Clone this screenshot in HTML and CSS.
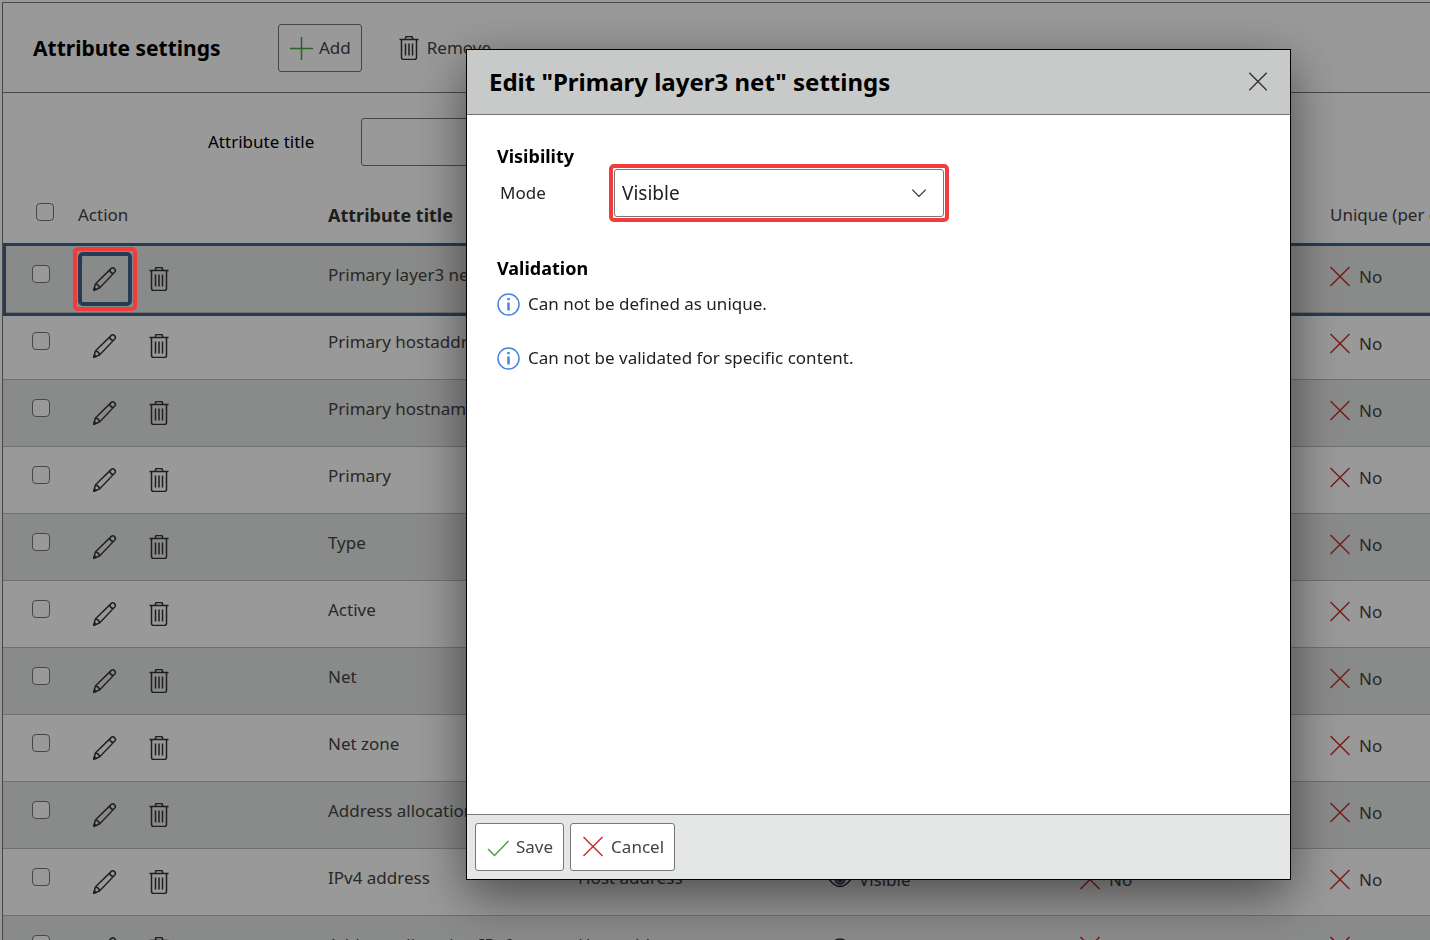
FILE: index.html
```html
<!DOCTYPE html>
<html lang="en">
<head>
    <meta charset="UTF-8">
    <meta name="viewport" content="width=device-width, initial-scale=1.0">
    <title>Attribute settings</title>
    <link rel="stylesheet" href="styles.css">
</head>
<body>

    <svg class="sprite" aria-hidden="true">
        <symbol id="i-plus" viewBox="0 0 24 24"><path d="M12.500 1v23M1 12.500h23"/></symbol>
        <symbol id="i-trash" viewBox="0 0 24 24"><path d="M2.500 3.500h19M8.500 3.500v-1.500q0-1.500 1.500-1.500h4q1.500 0 1.500 1.500v1.500M4.500 3.500v18q0 2 2 2h11q2 0 2-2v-18M8.500 7.500v12M12 7.500v12M15.500 7.500v12"/></symbol>
        <symbol id="i-pencil" viewBox="0 0 24 24"><path d="M.5 23.500L2.500 16.800 18.300 1.400q1.600-1.300 3.200.2t.4 3.300L6.600 20.900zM2.500 16.800q3.300.8 4.100 4.100M16.800 2.900q.4 3.300 3.600 3.700M.5 23.500l2.800-1-1.900-1.900z"/></symbol>
        <symbol id="i-cross" viewBox="0 0 24 24"><path d="M2.500 2l19 19M21.500 2l-19 19"/></symbol>
        <symbol id="i-check" viewBox="0 0 24 24"><path d="M2 14l6.500 6.500L22.500 6"/></symbol>
        <symbol id="i-info" viewBox="0 0 24 24"><circle cx="11.500" cy="12.500" r="10.500"/><path d="M11.500 10.500v8M11.500 6v2.300" stroke-width="2.500"/></symbol>
        <symbol id="i-eye" viewBox="0 0 24 24"><path d="M1 11q11-14 22 0-11 15-22 0z"/><circle cx="12" cy="11" r="5" fill="#6f9fe0"/><circle cx="12" cy="11" r="2" fill="#333"/></symbol>
        <symbol id="i-down" viewBox="0 0 24 24"><path d="M4 8l8 8 8-8"/></symbol>
    </svg>

    <main class="panel">
        <div class="toolbar">
            <h1>Attribute settings</h1>
            <button class="btn" type="button"><svg class="icon green"><use href="#i-plus"/></svg>Add</button>
            <button class="btn btn-plain" type="button"><svg class="icon"><use href="#i-trash"/></svg>Remove</button>
        </div>

        <div class="filter">
            <label for="filterTitle">Attribute title</label>
            <input type="text" id="filterTitle">
        </div>

        <table class="attributes">
            <colgroup>
                <col class="col-check">
                <col class="col-data">
                <col class="col-data">
                <col class="col-data">
                <col class="col-data">
                <col class="col-data">
                <col>
            </colgroup>
            <thead>
                <tr>
                    <th><input type="checkbox" aria-label="Select all"></th>
                    <th>Action</th>
                    <th class="sorted">Attribute title</th>
                    <th></th>
                    <th></th>
                    <th></th>
                    <th>Unique (per object)</th>
                </tr>
            </thead>
            <tbody id="rows"></tbody>
        </table>
    </main>

    <div class="backdrop">
        <div class="dialog" role="dialog" aria-labelledby="dialogTitle">
            <div class="dialog-header">
                <h2 id="dialogTitle">Edit "Primary layer3 net" settings</h2>
                <button class="close" type="button" aria-label="Close"><svg class="icon"><use href="#i-cross"/></svg></button>
            </div>
            <div class="dialog-body">
                <h3>Visibility</h3>
                <div class="field">
                    <label for="mode">Mode</label>
                    <div class="select marked">
                        <select id="mode">
                            <option>Visible</option>
                        </select>
                        <svg class="icon"><use href="#i-down"/></svg>
                    </div>
                </div>
                <h3>Validation</h3>
                <p class="info"><svg class="icon"><use href="#i-info"/></svg>Can not be defined as unique.</p>
                <p class="info"><svg class="icon"><use href="#i-info"/></svg>Can not be validated for specific content.</p>
            </div>
            <div class="dialog-footer">
                <button class="btn" type="button"><svg class="icon green"><use href="#i-check"/></svg>Save</button>
                <button class="btn" type="button"><svg class="icon red"><use href="#i-cross"/></svg>Cancel</button>
            </div>
        </div>
    </div>

    <script>
        const attributes = [
            { title: "Primary layer3 net", active: true },
            { title: "Primary hostaddress" },
            { title: "Primary hostname" },
            { title: "Primary" },
            { title: "Type" },
            { title: "Active" },
            { title: "Net" },
            { title: "Net zone" },
            { title: "Address allocation" },
            { title: "IPv4 address", type: "Host address" },
            { title: "Address allocation IPv6", type: "Host address" }
        ];

        function icon(name, cls) {
            return `<svg class="icon ${cls || ""}"><use href="#i-${name}"/></svg>`;
        }

        document.getElementById("rows").innerHTML = attributes.map(a => `
            <tr class="${a.active ? "active" : ""}">
                <td><input type="checkbox" aria-label="Select ${a.title}"></td>
                <td class="actions">
                    <button type="button" class="${a.active ? "focused marked" : ""}" aria-label="Edit">${icon("pencil")}</button>
                    <button type="button" aria-label="Delete">${icon("trash")}</button>
                </td>
                <td>${a.title}</td>
                <td>${a.type || ""}</td>
                <td>${a.type ? `<span class="state">${icon("eye")}Visible</span>` : ""}</td>
                <td>${a.type ? `<span class="state">${icon("cross", "red")}No</span>` : ""}</td>
                <td><span class="state">${icon("cross", "red")}No</span></td>
            </tr>`).join("");
    </script>

</body>
</html>
```
FILE: styles.css
```css
* {
    box-sizing: border-box;
}

body {
    font-family: 'Noto Sans', 'DejaVu Sans Condensed', sans-serif;
    font-size: 17px;
    line-height: 24px;
    color: #444;
    background: #fff;
    margin: 0;
    height: 100vh;
    overflow: hidden;
}

h1, h2, h3, p {
    margin: 0;
    color: #000;
}

button, input, select {
    font: inherit;
    color: inherit;
}

.sprite {
    position: absolute;
    width: 0;
    height: 0;
}

.icon {
    width: 24px;
    height: 24px;
    flex: none;
    fill: none;
    stroke: #333;
    stroke-width: 1.5;
}

.icon.green {
    stroke: #4f9e45;
}

.icon.red {
    stroke: #c9302c;
}

.panel {
    margin: 2px 0 0 2px;
    border-top: 1px solid #777;
    border-left: 1px solid #777;
}

.toolbar {
    display: flex;
    align-items: center;
    height: 90px;
    padding-left: 30px;
    border-bottom: 1px solid #777;
}

.toolbar h1 {
    width: 245px;
    font-size: 21px;
}

.btn {
    display: flex;
    align-items: center;
    gap: 6px;
    height: 48px;
    padding: 0 10px;
    background: #fff;
    border: 1px solid #777;
    border-radius: 3px;
}

.btn-plain {
    margin-left: 24px;
    border-color: transparent;
}

.filter {
    display: flex;
    align-items: center;
    padding: 25px 0 16px 205px;
}

.filter label {
    width: 153px;
    color: #000;
}

.filter input {
    flex: 1;
    height: 48px;
    margin-right: 200px;
    border: 1px solid #777;
    border-radius: 3px;
}

input[type="checkbox"] {
    appearance: none;
    display: block;
    width: 18px;
    height: 18px;
    margin: 0;
    background: #fff;
    border: 1px solid #777;
    border-radius: 4px;
}

.attributes {
    width: 100%;
    table-layout: fixed;
    border-collapse: separate;
    border-spacing: 0;
}

.col-check {
    width: 75px;
}

.col-data {
    width: 250px;
}

th, td {
    padding: 0;
    vertical-align: top;
    text-align: left;
    white-space: nowrap;
}

th {
    height: 64px;
    padding-top: 21px;
    font-weight: normal;
}

th.sorted {
    font-size: 18px;
    font-weight: bold;
    color: #333;
}

th:last-child {
    padding-left: 2px;
}

th input[type="checkbox"] {
    margin-left: 33px;
}

td {
    height: 67px;
    padding-top: 17px;
    border-bottom: 1px solid #bbb;
}

td input[type="checkbox"] {
    margin: 2px 0 0 29px;
}

tbody tr {
    position: relative;
}

tbody tr:nth-child(odd) {
    background: #e5e7e6;
}

tr.active td:first-child::after {
    content: "";
    position: absolute;
    inset: -3px 0;
    border: 3px solid #3c678c;
    border-right: none;
    pointer-events: none;
}

td.actions {
    padding-top: 6px;
    font-size: 0;
}

.actions button {
    display: inline-flex;
    align-items: center;
    justify-content: center;
    width: 54px;
    height: 54px;
    padding: 0;
    background: none;
    border: 4px solid transparent;
    border-radius: 5px;
}

.actions button.focused {
    border-color: #3c678c;
}

.state {
    display: flex;
    align-items: center;
    gap: 7px;
    padding-top: 2px;
}

/* red highlight frame */
.marked {
    position: relative;
}

.marked::after {
    content: "";
    position: absolute;
    inset: -5px;
    border: 4px solid #f43b3b;
    border-radius: 5px;
    pointer-events: none;
    z-index: 20;
}

.actions .marked::after {
    inset: -9px;
}

.backdrop {
    position: fixed;
    inset: 0;
    z-index: 10;
    display: flex;
    padding: 49px 139px 60px 466px;
    background: rgba(0, 0, 0, 0.4);
}

.dialog {
    flex: 1;
    display: flex;
    flex-direction: column;
    background: #fff;
    border: 1px solid #000;
    box-shadow: 0 16px 48px rgba(0, 0, 0, 0.5);
}

.dialog-header {
    display: flex;
    align-items: center;
    justify-content: space-between;
    height: 65px;
    padding: 0 21px 0 22px;
    background: #c8cac9;
    border-bottom: 1px solid #777;
}

.dialog-header h2 {
    font-size: 24px;
}

.close {
    display: flex;
    padding: 0;
    background: none;
    border: none;
}

.close .icon {
    width: 22px;
    height: 22px;
}

.dialog-body {
    flex: 1;
    padding: 29px 30px;
    color: #222;
}

.dialog-body h3 {
    font-size: 18px;
}

.field {
    display: flex;
    align-items: center;
    margin: 1px 0 39px 3px;
}

.field label {
    width: 114px;
}

.select {
    display: flex;
    align-items: center;
    justify-content: flex-end;
    width: 330px;
}

.select select {
    appearance: none;
    width: 100%;
    height: 48px;
    padding: 0 7px;
    font-size: 19px;
    background: #fff;
    border: 1px solid #777;
    border-radius: 3px;
}

.select .icon {
    position: absolute;
    right: 15px;
    width: 20px;
    height: 20px;
    pointer-events: none;
}

.info {
    display: flex;
    align-items: center;
    gap: 7px;
    margin: 12px 0 30px;
    color: #222;
}

.info .icon {
    stroke: #4a86d8;
}

.dialog-footer {
    display: flex;
    gap: 6px;
    padding: 8px;
    background: #e5e7e6;
    border-top: 1px solid #777;
}
```
